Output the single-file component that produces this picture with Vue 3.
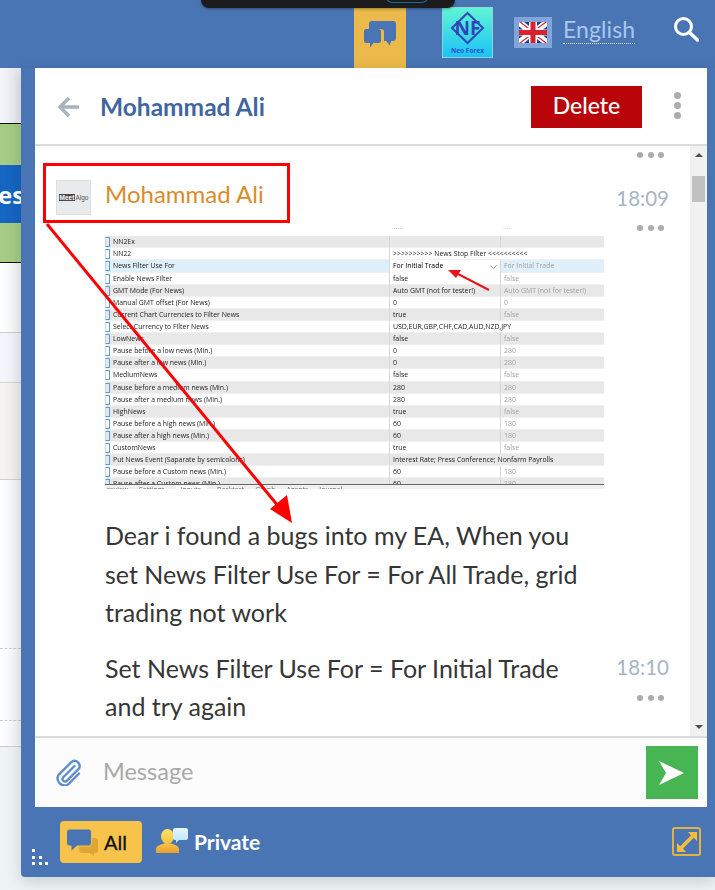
<template>
  <div class="page">
    <header class="topbar">
      <div class="notch"><span class="notch-arc"></span></div>
      <div class="chat-tab">
        <svg width="32" height="27" viewBox="0 0 32 27">
          <path d="M8 0h21a3 3 0 0 1 3 3v14a3 3 0 0 1-3 3h-2l-1 4.500-4-4.500h-2V11a3 3 0 0 0-3-3H5V3a3 3 0 0 1 3-3z" fill="#4a75b5"/>
          <path d="M2.500 8h12a2.500 2.500 0 0 1 2.500 2.500v9a2.500 2.500 0 0 1-2.500 2.500H9.500L6 26.500V22H2.500A2.500 2.500 0 0 1 0 19.500v-9A2.500 2.500 0 0 1 2.500 8z" fill="#4a75b5"/>
        </svg>
      </div>
      <div class="brand">
        <svg width="51" height="51" viewBox="0 0 51 51">
          <defs>
            <linearGradient id="brandBg" x1="0" y1="0" x2="0" y2="1">
              <stop offset="0" stop-color="#62f5d4"/>
              <stop offset="1" stop-color="#19c2f7"/>
            </linearGradient>
          </defs>
          <rect x="0.500" y="0.500" width="50" height="50" fill="url(#brandBg)" stroke="#8fd5d8"/>
          <path d="M25.500 6L41 21 25.500 36 10 21z" fill="none" stroke="#2d4bb8" stroke-width="2"/>
          <text x="25.500" y="28" text-anchor="middle" class="brand-nf">NF</text>
          <text x="25.500" y="46" text-anchor="middle" class="brand-name">Neo Forex</text>
        </svg>
      </div>
      <div class="flag-box">
        <svg width="28" height="21" viewBox="0 0 28 21">
          <rect width="28" height="21" fill="#fff"/>
          <path d="M5 0h5v4zM23 0h-5v4zM5 21h5v-4zM23 21h-5v-4zM0 4.500l4 3H0zM28 4.500l-4 3h4zM0 16.500l4-3H0zM28 16.500l-4-3h4z" fill="#1f3a93"/>
          <path d="M0 0h2l8 6H8zM28 0h-2l-8 6h2zM0 21h2l8-6H8zM28 21h-2l-8-6h2z" fill="#d8232f"/>
          <rect x="11.500" width="5" height="21" fill="#d8232f"/>
          <rect y="8" width="28" height="5" fill="#d8232f"/>
        </svg>
      </div>
      <span class="lang">English</span>
      <svg class="search" width="26" height="26" viewBox="0 0 26 26" fill="none" stroke="#fff" stroke-width="3">
        <circle cx="10.500" cy="10.500" r="8"/>
        <path d="M16.500 16.500L24.500 24" stroke-linecap="round" stroke-width="3.500"/>
      </svg>
    </header>

    <div class="behind">
      <div class="strip s-white"></div>
      <div class="strip s-green"></div>
      <div class="strip s-blue">es</div>
      <div class="strip s-green s-green-low"></div>
      <div class="strip s-row1"></div>
      <div class="strip s-row2"></div>
      <div class="strip s-beige"></div>
      <div class="strip s-row3"></div>
      <div class="strip s-row4"></div>
      <div class="strip s-row5"></div>
    </div>

    <section class="chat">
      <div class="panel">
        <div class="panel-head">
          <svg class="back" width="24" height="22" viewBox="0 0 24 22" fill="none" stroke="#a9b3bd" stroke-width="3.500">
            <path d="M22 11H3M12 2l-9 9 9 9"/>
          </svg>
          <span class="title">Mohammad Ali</span>
          <button class="delete">Delete</button>
          <div class="kebab"><i></i><i></i><i></i></div>
        </div>

        <div class="body">
          <div class="list">
            <div class="dots first"><i></i><i></i><i></i></div>

            <div class="author">
              <div class="avatar"><span class="meet">Meet</span><span class="algo">Algo</span></div>
              <span class="author-name">Mohammad Ali</span>
              <span class="time">18:09</span>
            </div>

            <div class="dots second"><i></i><i></i><i></i></div>

            <div class="shot">
              <div class="shot-rows">
                <div class="shot-clip"><span>......</span><span>.....</span></div>
                <div v-for="row in rows" :key="row[0]" class="shot-row" :class="{ active: row[3] }">
                  <div class="c-name"><i class="tick"></i>{{ row[0] }}</div>
                  <div class="c-val" :class="{ wide: row[2] === null, sel: row[3] }">
                    {{ row[1] }}
                    <svg v-if="row[3]" width="7" height="4" viewBox="0 0 7 4" fill="none" stroke="#888"><path d="M0.500 0.500l3 3 3-3"/></svg>
                  </div>
                  <div v-if="row[2] !== null" class="c-def">{{ row[2] }}</div>
                </div>
              </div>
              <div class="shot-tabs">
                <span>review</span><span>Settings</span><span class="on">Inputs</span><span>Backtest</span><span>Graph</span><span>Agents</span><span>Journal</span>
              </div>
            </div>

            <p class="text first-text">Dear i found a bugs into my EA, When you set News Filter Use For = For All Trade, grid trading not work</p>

            <div class="reply">
              <p class="text">Set News Filter Use For = For Initial Trade and try again</p>
              <span class="time">18:10</span>
            </div>
            <div class="dots third"><i></i><i></i><i></i></div>
          </div>

          <div class="scroll">
            <span class="arrow up"></span>
            <span class="thumb"></span>
            <span class="arrow down"></span>
          </div>
        </div>

        <div class="compose">
          <svg class="clip" width="27" height="27" viewBox="0 0 27 27" fill="none" stroke="#5f8ecb" stroke-width="2.400" stroke-linecap="round">
            <path d="M19.500 7L8 18.500a2.500 2.500 0 0 0 3.500 3.500L23.500 10a5 5 0 0 0-7-7L3.500 16a7 7 0 0 0 9.500 9.500L24 14.500"/>
          </svg>
          <span class="placeholder">Message</span>
          <button class="send">
            <svg width="26" height="24" viewBox="0 0 26 24"><path d="M0 0l25 12L0 24l7-12z" fill="#fff"/></svg>
          </button>
        </div>
      </div>

      <footer class="chat-foot">
        <div class="grip">
          <i></i><i></i><i></i><i></i><i></i><i></i>
        </div>
        <button class="tab-all">
          <svg width="33" height="28" viewBox="0 0 33 28">
            <path d="M16 10h13a3 3 0 0 1 3 3v9a3 3 0 0 1-3 3h-1v3l-4-3h-8a3 3 0 0 1-3-3v-9a3 3 0 0 1 3-3z" fill="#dfa636"/>
            <path d="M3.500 1h19A3 3 0 0 1 25.500 4v11a3 3 0 0 1-3 3H11l-6 5.500V18H3.500A3 3 0 0 1 .500 15V4a3 3 0 0 1 3-3z" fill="#4a75b5" stroke="#f7c34a"/>
          </svg>
          All
        </button>
        <button class="tab-private">
          <svg width="32" height="26" viewBox="0 0 32 26">
            <defs>
              <linearGradient id="headFill" x1="0" y1="0" x2="0" y2="1">
                <stop offset="0" stop-color="#ffe36a"/>
                <stop offset="1" stop-color="#f5c33e"/>
              </linearGradient>
              <linearGradient id="bodyFill" x1="0" y1="0" x2="0" y2="1">
                <stop offset="0" stop-color="#f8c246"/>
                <stop offset="1" stop-color="#ea9f2c"/>
              </linearGradient>
              <linearGradient id="talkFill" x1="0" y1="0" x2="0" y2="1">
                <stop offset="0" stop-color="#e8f8ff"/>
                <stop offset="1" stop-color="#b4e4fb"/>
              </linearGradient>
            </defs>
            <ellipse cx="11.500" cy="8.500" rx="6.500" ry="7.500" fill="url(#headFill)"/>
            <path d="M0 25v-4c0-3 4-4 8-5.500h7c4 1.500 8 2.500 8 5.500v4z" fill="url(#bodyFill)"/>
            <path d="M19 0h11a2 2 0 0 1 2 2v8a2 2 0 0 1-2 2h-7l-3 3v-3h-1a2 2 0 0 1-2-2V2a2 2 0 0 1 2-2z" fill="url(#talkFill)"/>
          </svg>
          Private
        </button>
        <button class="expand">
          <svg width="20" height="20" viewBox="0 0 20 20" fill="#f7bb3d">
            <path d="M11 0h9v9l-3.200-3.200L6 16.500 9 20H0v-9l3.200 3.200L14 3.300z"/>
          </svg>
        </button>
      </footer>
    </section>

    <svg class="marks" width="715" height="890" viewBox="0 0 715 890">
      <rect x="44.500" y="164.500" width="244" height="57" fill="none" stroke="#f00" stroke-width="3"/>
      <path d="M47 224L283 512" stroke="#f00" stroke-width="3" fill="none"/>
      <path d="M292 523L270 509 287 495z" fill="#f00"/>
      <path d="M489 290L458 274" stroke="#e8141c" stroke-width="2" fill="none"/>
      <path d="M448 270L461 270 456 278z" fill="#e8141c"/>
    </svg>
  </div>
</template>

<script setup>
// name, value, default (null = value spans both columns), select open
const rows = [
  ['NN2Ex', '', ''],
  ['NN22', '>>>>>>>>>> News Stop Filter <<<<<<<<<<', null],
  ['News Filter Use For', 'For Initial Trade', 'For Initial Trade', true],
  ['Enable News Filter', 'false', 'false'],
  ['GMT Mode (For News)', 'Auto GMT (not for tester!)', 'Auto GMT (not for tester!)'],
  ['Manual GMT offset (For News)', '0', '0'],
  ['Current Chart Currencies to Filter News', 'true', 'false'],
  ['Select Currency to Filter News', 'USD,EUR,GBP,CHF,CAD,AUD,NZD,JPY', null],
  ['LowNews', 'false', 'false'],
  ['Pause before a low news (Min.)', '0', '280'],
  ['Pause after a low news (Min.)', '0', '280'],
  ['MediumNews', 'false', 'false'],
  ['Pause before a medium news (Min.)', '280', '280'],
  ['Pause after a medium news (Min.)', '280', '280'],
  ['HighNews', 'true', 'false'],
  ['Pause before a high news (Min.)', '60', '180'],
  ['Pause after a high news (Min.)', '60', '180'],
  ['CustomNews', 'true', 'false'],
  ['Put News Event (Saparate by semicolons)', 'Interest Rate; Press Conference; Nonfarm Payrolls', null],
  ['Pause before a Custom news (Min.)', '60', '180'],
  ['Pause after a Custom news (Min.)', '60', '180'],
]
</script>

<style>
html, body {
  margin: 0;
  background: #eef3f6;
}
</style>

<style scoped>
.page {
  position: relative;
  width: 715px;
  height: 890px;
  overflow: hidden;
  background: #eef3f6;
  font-family: Lato, "Open Sans", sans-serif;
}

.topbar {
  position: relative;
  height: 68px;
  background: #4a75b5;
  display: flex;
  align-items: flex-start;
  box-sizing: border-box;
  padding-left: 354px;
}
.notch {
  position: absolute;
  left: 201px;
  top: 0;
  width: 254px;
  height: 8px;
  background: #1c1c1c;
  border-radius: 0 0 11px 11px;
  box-shadow: 0 1px 3px rgba(0, 0, 0, .35);
}
.notch-arc {
  position: absolute;
  left: 185px;
  top: -3px;
  width: 40px;
  height: 4px;
  border: 1px solid #0f6f9c;
  border-radius: 0 0 6px 6px;
}
.chat-tab {
  width: 52px;
  height: 60px;
  margin-top: 8px;
  background: #ebba4a;
  display: flex;
  justify-content: center;
  padding-top: 13px;
  box-sizing: border-box;
}
.brand {
  margin: 7px 0 0 36px;
  height: 51px;
}
.brand-nf {
  font: 700 19px "Open Sans", sans-serif;
  fill: #2f45b8;
}
.brand-name {
  font: 700 6.500px "Open Sans", sans-serif;
  fill: #2f55c8;
}
.flag-box {
  margin: 17px 0 0 21px;
  width: 38px;
  height: 31px;
  background: #82a5d8;
  display: flex;
  align-items: center;
  justify-content: center;
}
.lang {
  margin: 15px 0 0 11px;
  font-size: 23px;
  line-height: 28px;
  letter-spacing: .1px;
  color: #a9c6ec;
  border-bottom: 1px dotted #e4eefa;
}
.search {
  margin: 16px 0 0 38px;
}

.behind {
  width: 21px;
  display: flex;
  flex-direction: column;
}
.strip {
  background: linear-gradient(90deg, #fff, #f2f3f5);
  box-sizing: border-box;
}
.s-white { height: 56px; background: linear-gradient(90deg, #f3f5fb, #e4e6ec); border-bottom: 1px solid #111; }
.s-green { height: 41px; background: #a5cb84; }
.s-green-low { height: 40px; border-bottom: 1px solid #111; }
.s-blue {
  height: 58px;
  background: #1565c2;
  color: #fff;
  font: 700 24px/60px "Open Sans", sans-serif;
  text-indent: -2px;
  overflow: hidden;
  white-space: nowrap;
}
.s-row1 { height: 70px; border-bottom: 1px solid #ccc; }
.s-row2 { height: 49px; background: linear-gradient(90deg, #f4f6fd, #eef0f6); }
.s-beige { height: 98px; background: linear-gradient(90deg, #f6f5f1, #eeede8); border-top: 1px solid #d4d4d2; border-bottom: 1px solid #d0d0ce; }
.s-row3 { height: 169px; border-bottom: 1px dashed #ccc; }
.s-row4 { height: 72px; border-bottom: 1px dashed #ccc; }
.s-row5 { height: 26px; border-bottom: 1px solid #ccc; }

.chat {
  position: absolute;
  left: 21px;
  top: 68px;
  right: 0;
  height: 809px;
  background: #4a75b5;
  border-radius: 0 0 0 4px;
  box-shadow: 0 4px 16px rgba(0, 0, 0, .16);
  display: flex;
  flex-direction: column;
}
.panel {
  flex: 1;
  min-height: 0;
  margin: 0 8px 0 14px;
  display: flex;
  flex-direction: column;
  background: #fff;
}

.panel-head {
  height: 78px;
  box-sizing: border-box;
  border-bottom: 2px solid #dcdcdc;
  display: flex;
  align-items: center;
  padding: 2px 26px 0 22px;
}
.back {
  flex: none;
}
.title {
  flex: 1;
  margin: -1px 0 0 19px;
  font-size: 24.500px;
  font-weight: 700;
  color: #41669f;
}
.delete {
  width: 111px;
  height: 42px;
  border: 0;
  background: #b90509;
  color: #fff;
  font: 500 23px Lato, sans-serif;
  padding: 0 0 5px;
}
.kebab {
  margin: -4px 0 0 32px;
  width: 7px;
  display: flex;
  flex-direction: column;
  gap: 3px;
}
.kebab i {
  width: 7px;
  height: 7px;
  border-radius: 50%;
  background: #a9acb0;
}

.body {
  flex: 1;
  min-height: 0;
  display: flex;
}
.list {
  flex: 1;
  min-width: 0;
  overflow: hidden;
  padding: 6px 22px 0 70px;
}
.scroll {
  width: 17px;
  background: #f1f1f1;
  position: relative;
  flex: none;
}
.thumb {
  position: absolute;
  left: 2px;
  top: 30px;
  width: 13px;
  height: 26px;
  background: #c1c1c1;
}
.arrow {
  position: absolute;
  left: 5px;
  width: 0;
  height: 0;
  border-left: 4px solid transparent;
  border-right: 4px solid transparent;
}
.arrow.up { top: 7px; border-bottom: 4px solid #505050; }
.arrow.down { bottom: 7px; border-top: 4px solid #505050; }

.dots {
  display: flex;
  justify-content: flex-end;
  gap: 4.500px;
  height: 6px;
  padding-right: 4px;
}
.dots i {
  width: 6px;
  height: 6px;
  border-radius: 50%;
  background: #a9acb0;
}

.author {
  display: flex;
  align-items: center;
  margin: 22px 0 10px -49px;
  height: 35px;
}
.avatar {
  width: 35px;
  height: 35px;
  box-sizing: border-box;
  border: 1px solid #dedfe1;
  background: #e9eaec;
  display: flex;
  align-items: center;
  justify-content: center;
  font: 700 6.500px "Liberation Sans", sans-serif;
  margin-right: 14px;
}
.meet {
  background: #4a4a4a;
  color: #fff;
  padding: 0 1px;
}
.algo {
  color: #555;
  font-weight: 400;
}
.author-name {
  flex: 1;
  font-size: 24px;
  color: #d98c2c;
  position: relative;
  top: -4px;
}
.time {
  font-size: 20.500px;
  color: #a9b5c2;
  position: relative;
  left: 1px;
}

.second {
  margin-bottom: -6px;
}
.shot {
  width: 499px;
  height: 264px;
  overflow: hidden;
  font: 6.900px/12.120px "Open Sans", sans-serif;
  color: #222;
  filter: blur(.25px);
}
.shot-rows {
  height: 258.500px;
  overflow: hidden;
}
.shot-clip {
  height: 11.200px;
  overflow: hidden;
  display: flex;
  color: #bbb;
  padding-left: 287px;
  gap: 100px;
  line-height: 4px;
}
.shot-row {
  display: flex;
  height: 12.120px;
  background: #fff;
  box-shadow: inset 0 -1px 0 #f0f0f0;
  white-space: nowrap;
}
.shot-row:nth-of-type(even) {
  background: #e8e8e8;
}
.shot-row.active {
  background: #dff0fb;
}
.c-name {
  width: 284px;
  flex: none;
  display: flex;
  align-items: center;
}
.tick {
  width: 3px;
  height: 8px;
  margin-right: 3px;
  border: 1px solid #5b9bd5;
  border-left-color: #bcd6ee;
  border-radius: 1px;
}
.c-val {
  width: 112px;
  flex: none;
  box-sizing: border-box;
  padding-left: 3px;
  border-left: 1px solid #d8d8d8;
  border-right: 1px solid #d8d8d8;
  position: relative;
}
.c-val.wide {
  width: 215px;
  border-right: 0;
}
.c-val.sel {
  background: #fff;
  color: #000;
}
.c-val svg {
  position: absolute;
  right: 3px;
  top: 5px;
}
.c-def {
  flex: 1;
  padding-left: 3px;
  color: #a2a2a2;
}
.shot-tabs {
  height: 6px;
  background: #f0f0f0;
  border-top: 1px solid #666;
  display: flex;
  gap: 11px;
  padding-left: 2px;
  line-height: 9px;
  color: #666;
}
.shot-tabs .on {
  background: #fff;
  padding: 0 5px;
}

.text {
  margin: 0;
  font-size: 25px;
  line-height: 38.500px;
  color: #363636;
  width: 490px;
}
.first-text {
  margin-top: 27px;
}
.reply {
  display: flex;
  justify-content: space-between;
  margin-top: 17px;
}
.reply .time {
  top: 6px;
  height: 30px;
}
.third {
  margin-top: -31px;
  position: relative;
}

.compose {
  height: 71px;
  box-sizing: border-box;
  border-top: 2px solid #dcdcdc;
  background: #fcfcfc;
  display: flex;
  align-items: center;
  padding: 0 9px 0 20px;
}
.clip {
  flex: none;
}
.placeholder {
  flex: 1;
  margin: -3px 0 0 21px;
  font-size: 23.500px;
  color: #a9a9a9;
}
.send {
  width: 52px;
  height: 53px;
  border: 0;
  padding: 0;
  background: #47b552;
  display: flex;
  align-items: center;
  justify-content: center;
}

.chat-foot {
  position: relative;
  height: 70px;
  flex: none;
  display: flex;
  align-items: center;
  padding-left: 39px;
}
.grip {
  position: absolute;
  left: 11px;
  bottom: 12px;
  width: 17px;
  height: 16px;
  display: grid;
  grid-template-columns: repeat(3, 3px);
  grid-template-rows: repeat(3, 3px);
  gap: 3.500px;
}
.grip i {
  background: #fff;
}
.grip i:nth-child(1) { grid-area: 1 / 1; }
.grip i:nth-child(2) { grid-area: 2 / 1; }
.grip i:nth-child(3) { grid-area: 2 / 2; }
.grip i:nth-child(4) { grid-area: 3 / 1; }
.grip i:nth-child(5) { grid-area: 3 / 2; }
.grip i:nth-child(6) { grid-area: 3 / 3; }
.tab-all,
.tab-private {
  border: 0;
  display: flex;
  align-items: center;
  font: 700 21px Lato, sans-serif;
  padding: 0;
}
.tab-all {
  width: 82px;
  height: 42px;
  background: #f7c34a;
  border-radius: 4px;
  color: #111;
  padding-left: 6px;
  gap: 5px;
  font-size: 20px;
  font-weight: 400;
  -webkit-text-stroke: .3px #111;
}
.tab-private {
  background: none;
  color: #fff;
  margin: -2px 0 0 14px;
  gap: 6px;
}
.expand {
  position: absolute;
  left: 651px;
  top: 20px;
  width: 29px;
  height: 29px;
  box-sizing: border-box;
  padding: 0;
  background: none;
  border: 2px solid #e3b044;
  border-radius: 3px;
  display: flex;
  align-items: center;
  justify-content: center;
}

.marks {
  position: absolute;
  left: 0;
  top: 0;
  pointer-events: none;
}
</style>
